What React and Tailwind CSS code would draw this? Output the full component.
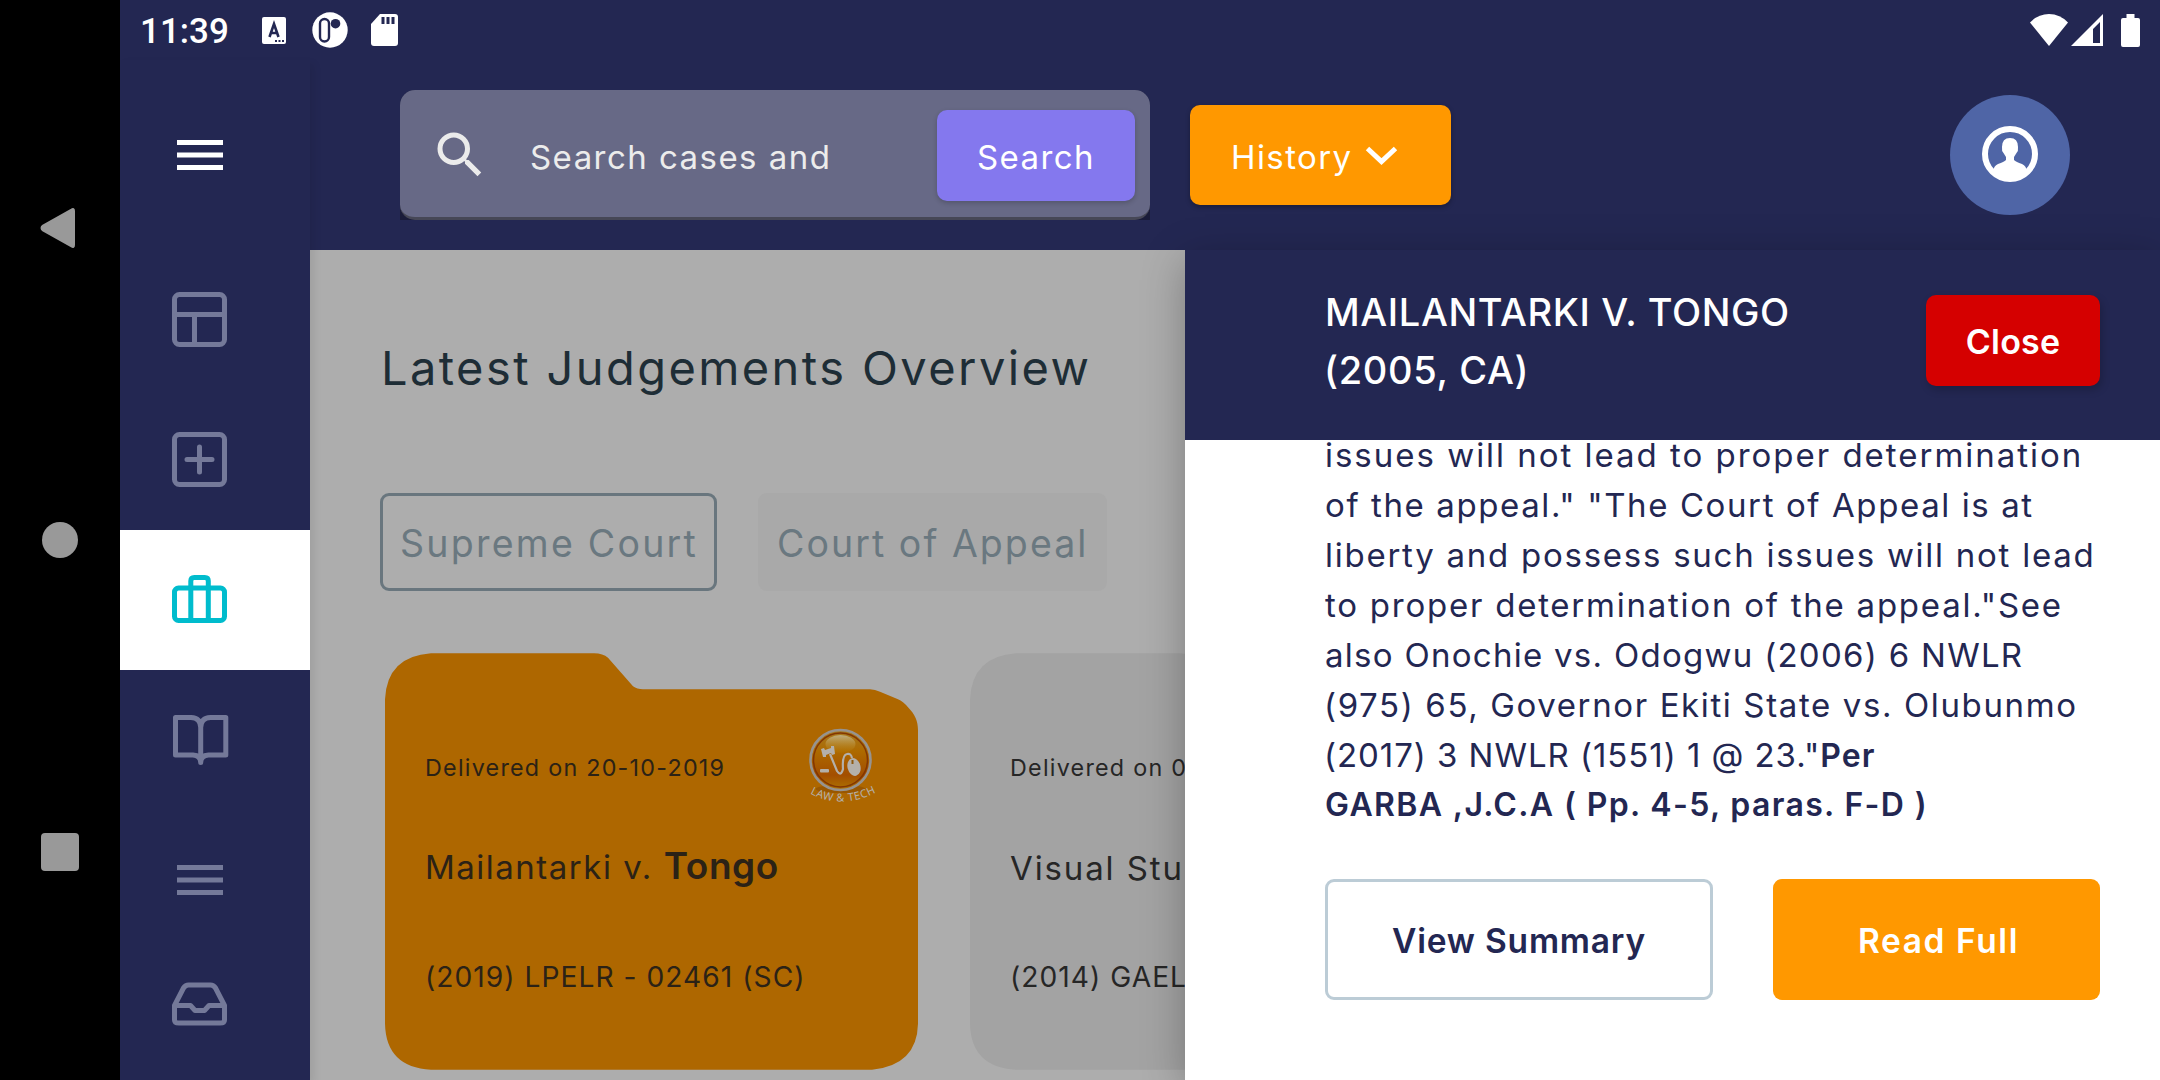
import React from "react";

const FOLDER_PATH =
  "M46 0H209Q218 0 223 4.5L248 33Q252 36 258 36H485Q490 36 495 38.5L513 46Q518 48 523 54C530 61 533 68 533 77V370.5Q532 412 487 416.5H46Q1 414 0 370.5V46Q2 3 46 0Z";

function NavBar() {
  return (
    <div className="flex h-full w-[120px] shrink-0 flex-col items-center bg-black">
      <svg className="mt-[204px] h-[48px] w-[120px]" viewBox="0 0 120 48">
        <path d="M43 21.500L71.500 5.500Q74 4 74 7V41Q74 44 71.500 42.500L43 26.500Q40 24 43 21.500Z" fill="#999" stroke="#999" strokeWidth="2" />
      </svg>
      <div className="mt-[270px] size-[36px] rounded-full bg-[#999]" />
      <div className="mt-[275px] size-[38px] rounded-[4px] bg-[#999]" />
    </div>
  );
}

function StatusBar() {
  return (
    <div className="flex h-[60px] w-full shrink-0 items-center bg-[#232752] pl-[20px] pr-[20px] text-white">
      <span className="w-[90px] whitespace-nowrap pt-[3px] font-['Roboto'] text-[35px] font-medium leading-[40px]">11:39</span>
      <svg className="ml-[32px] h-[27px] w-[24px]" viewBox="0 0 24 27">
        <rect width="24" height="27" rx="2" fill="#fff" />
        <path d="M7.500 20L12 7L16.500 20M9 16H15" fill="none" stroke="#232752" strokeWidth="2.600" />
        <path d="M13 24H15M16.500 24H18.500M20 24H22" stroke="#232752" strokeWidth="2" />
      </svg>
      <svg className="ml-[26px] h-[36px] w-[36px]" viewBox="0 0 36 36">
        <circle cx="18" cy="18" r="17.700" fill="#fff" />
        <rect x="8" y="7" width="9" height="22.500" rx="4.500" fill="#fff" stroke="#232752" strokeWidth="2.400" />
        <circle cx="23.500" cy="11.700" r="4.800" fill="#232752" />
      </svg>
      <svg className="ml-[23px] h-[32px] w-[27px]" viewBox="0 0 27 32">
        <path d="M9 0H24Q27 0 27 3V29Q27 32 24 32H3Q0 32 0 29V10Z" fill="#fff" />
        <path d="M12 3V10M17 3V10M22 3V10" stroke="#232752" strokeWidth="3" />
      </svg>
      <svg className="ml-auto h-[32px] w-[38px]" viewBox="0 0 38 32">
        <path d="M0 8.500Q8 0 19 0T38 8.500L19 32Z" fill="#fff" />
      </svg>
      <svg className="ml-[3px] h-[32px] w-[32px]" viewBox="0 0 32 32">
        <path d="M32 0V32H0ZM29 8L22 15V29H29Z" fill="#fff" fillRule="evenodd" />
      </svg>
      <svg className="ml-[18px] h-[33px] w-[19px]" viewBox="0 0 19 33">
        <path d="M5.500 0H13.500V4H17Q19 4 19 6V31Q19 33 17 33H2Q0 33 0 31V6Q0 4 2 4H5.500Z" fill="#fff" />
      </svg>
    </div>
  );
}

const menuPath = "M7 17.500H53M7 30H53M7 42.500H53";

const sideItems = [
  {
    name: "dashboard",
    box: "h-[140px]",
    icon: (
      <>
        <rect x="4.500" y="4.500" width="50" height="50" rx="5" />
        <path d="M4.500 24.500H54.500M24.500 24.500V54.500" />
      </>
    ),
  },
  {
    name: "add",
    box: "h-[140px]",
    icon: (
      <>
        <rect x="4.500" y="4.500" width="50" height="50" rx="5" />
        <path d="M17 29.500H42M29.500 17V42" strokeLinecap="round" />
      </>
    ),
  },
  {
    name: "cases",
    box: "h-[140px] bg-white",
    active: true,
    icon: (
      <>
        <rect x="4.500" y="18" width="50" height="32.500" rx="4" />
        <path d="M20.800 50.500V11Q20.800 7.500 24.300 7.500H34.800Q38.300 7.500 38.300 11V50.500" />
      </>
    ),
  },
  {
    name: "library",
    box: "h-[140px]",
    icon: (
      <path
        d="M5.500 7.500H21Q30.700 8 30.700 17.500Q30.700 8 40.500 7.500H55.800V45H38.500Q30.700 45.500 30.700 52.500Q30.700 45.500 23 45H5.500ZM30.700 15V52.500"
        strokeLinejoin="round"
        strokeLinecap="round"
      />
    ),
  },
  { name: "list", box: "h-[140px]", icon: <path d={menuPath} /> },
  {
    name: "inbox",
    box: "h-[107px]",
    icon: (
      <path
        d="M4.500 31.500H20.500L25 36.500H34.500L39 31.500H54.500M4.500 31.500L13.500 14Q15.500 11 18.500 11H40.500Q43.500 11 45.500 14L54.500 31.500V46Q54.500 49 50 49H9Q4.500 49 4.500 46Z"
        strokeLinejoin="round"
      />
    ),
  },
];

function Sidebar() {
  return (
    <div className="relative z-10 flex w-[190px] shrink-0 flex-col bg-[#232752] shadow-[4px_4px_8px_rgba(0,0,0,0.08)]">
      <div className="flex h-[190px] shrink-0 items-center pl-[50px]">
        <svg className="size-[60px]" viewBox="0 0 60 60" fill="none" stroke="#fff" strokeWidth="5">
          <path d={menuPath} />
        </svg>
      </div>
      {sideItems.map((item) => (
        <div key={item.name} className={"flex shrink-0 items-center pl-[50px] " + item.box}>
          <svg className="size-[60px]" viewBox="0 0 60 60" fill="none" stroke={item.active ? "#00bccd" : "#747999"} strokeWidth="5">
            {item.icon}
          </svg>
        </div>
      ))}
    </div>
  );
}

function Header() {
  return (
    <div className="flex h-[190px] shrink-0 items-center bg-[#232752] pl-[90px] pr-[90px]">
      <div className="h-[130px] w-[750px] shrink-0 rounded-t-[15px] bg-[#1a1c3a]">
        <div className="flex h-[130px] items-center rounded-[15px] border-b-[3px] border-[#464756] bg-[#676986] pl-[30px] pr-[15px]">
          <svg className="mt-[3px] size-[60px] shrink-0" viewBox="0 0 24 24" fill="#ebebeb">
            <path d="M15.500 14h-.79l-.28-.27A6.471 6.471 0 0 0 16 9.500 6.500 6.500 0 1 0 9.500 16c1.610 0 3.090-.59 4.230-1.570l.27.28v.79l5 4.990L20.490 19l-4.990-5zm-6 0C7.010 14 5 11.990 5 9.500S7.010 5 9.500 5 14 7.010 14 9.500 11.990 14 9.500 14z" />
          </svg>
          <span className="ml-[40px] whitespace-nowrap pt-[6px] text-[33px] leading-[40px] tracking-[1.45px] text-[#ececec]">Search cases and</span>
          <button className="ml-auto mt-[3px] h-[91px] w-[198px] rounded-[10px] bg-[#8478ee] pl-[40px] pt-[3px] text-left text-[33px] leading-[40px] tracking-[1.4px] text-white shadow-[0_2px_5px_rgba(0,0,0,0.2)]">Search</button>
        </div>
      </div>
      <button className="ml-[40px] flex h-[100px] w-[261px] shrink-0 items-center rounded-[10px] bg-[#ff9800] pl-[41px] text-white shadow-[0_2px_5px_rgba(0,0,0,0.3)]">
        <span className="w-[122px] whitespace-nowrap pt-[3px] text-left text-[33px] leading-[40px] tracking-[1.4px]">History</span>
        <svg className="ml-[12px] mt-[2px] h-[20px] w-[33px]" viewBox="0 0 33 20" fill="none" stroke="#fff" strokeWidth="5">
          <path d="M2.500 2.500L16.500 15.500L30.500 2.500" />
        </svg>
      </button>
      <div className="ml-auto flex size-[120px] shrink-0 items-center justify-center rounded-full bg-[#4f65a6]">
        <svg className="-mt-[2px] size-[56px]" viewBox="0 0 56 56">
          <circle cx="28" cy="28" r="25" fill="none" stroke="#fff" strokeWidth="6" />
          <path d="M20 21Q20 12 28 12T36 21Q36.500 25 34.500 27L32 31V34Q34 36 40 38Q44.500 40 44.500 44.500Q38 53 28 53T11.500 44.500Q11.500 40 16 38Q22 36 24 34V31L21.500 27Q19.500 25 20 21Z" fill="#fff" />
        </svg>
      </div>
    </div>
  );
}

function Logo() {
  return (
    <svg className="absolute left-[415px] top-[67px] h-[90px] w-[84px]" viewBox="0 0 84 90">
      <defs>
        <linearGradient id="ball" x1="0" y1="0" x2="0" y2="1">
          <stop offset="0" stopColor="#a77a22" />
          <stop offset=".35" stopColor="#ad6a00" />
          <stop offset=".75" stopColor="#a34e00" />
          <stop offset="1" stopColor="#ad7400" />
        </linearGradient>
        <linearGradient id="gloss" x1="0" y1="0" x2="0" y2="1">
          <stop offset="0" stopColor="#bfae80" />
          <stop offset="1" stopColor="#b87a00" stopOpacity=".2" />
        </linearGradient>
        <path id="arc" d="M9 73Q41 91 78 71.500" />
      </defs>
      <ellipse cx="40.500" cy="69" rx="25" ry="4" fill="#8a4c00" opacity=".6" />
      <circle cx="40.500" cy="40" r="30" fill="url(#ball)" stroke="#97938f" strokeWidth="2.600" />
      <circle cx="40.500" cy="40" r="27" fill="none" stroke="#843600" strokeWidth="1.500" />
      <ellipse cx="40.500" cy="24" rx="15" ry="9" fill="url(#gloss)" />
      <g fill="#b4b0aa">
        <path d="M21 29L24 28L25 30L31 28L31 26L34 26L35 34L32 35L31 33L26 35L26 37L23 37Z" />
        <rect x="20" y="49" width="9" height="3.500" rx="1" />
        <ellipse cx="54" cy="47" rx="6.500" ry="9" transform="rotate(-14 54 47)" />
      </g>
      <path d="M30 34L37 51Q41 57 43 49Q42 35 47 34Q51 33 52 38" fill="none" stroke="#b4b0aa" strokeWidth="2.200" />
      <path d="M52.500 40V44" stroke="#8f5a10" strokeWidth="2" />
      <text fontFamily="'Noto Sans', sans-serif" fontSize="11" fill="#b4b0aa">
        <textPath href="#arc" textLength="69" startOffset="1">LAW &amp; TECH</textPath>
      </text>
    </svg>
  );
}

function Card({ fill, ink, date, title, strong, cite, titleClass, logo }) {
  return (
    <div className={"relative h-[417px] w-[533px] shrink-0 whitespace-nowrap pl-[40px] pt-[100px] " + ink}>
      <svg className="absolute inset-0 -z-10 h-[417px] w-[533px]" viewBox="0 0 533 416.500">
        <path d={FOLDER_PATH} fill={fill} />
      </svg>
      <div className="text-[23.3px] leading-[30px] tracking-[1.25px]">{date}</div>
      <div className={"mt-[58px] flex h-[50px] items-baseline text-[33px] leading-[50px] " + titleClass}>
        <span>{title}</span>
        {strong && <span className="ml-[11px] text-[37px] font-semibold tracking-[0.54px]">{strong}</span>}
      </div>
      <div className="mt-[66px] text-[28.2px] leading-[40px] tracking-[1.02px]">{cite}</div>
      {logo && <Logo />}
    </div>
  );
}

function Content() {
  return (
    <div className="relative isolate flex w-[875px] shrink-0 flex-col overflow-hidden bg-[#adadad] pl-[70px]">
      <h1 className="ml-px mt-[88px] whitespace-nowrap text-[47px] leading-[60px] tracking-[2.41px] text-[#1e2d36]">Latest Judgements Overview</h1>
      <div className="mt-[95px] flex text-[37.5px] leading-[50px] text-[#6a7880]">
        <div className="h-[98px] w-[337px] whitespace-nowrap rounded-[9px] border-[3px] border-[#69767e] pl-[17px] pt-[23px] tracking-[2.25px]">Supreme Court</div>
        <div className="ml-[41px] h-[98px] w-[349px] whitespace-nowrap rounded-[9px] bg-[#a9a9a9] pl-[19px] pt-[26px] tracking-[2.05px]">Court of Appeal</div>
      </div>
      <div className="ml-[5px] mt-[62px] flex gap-[52px]">
        <Card
          fill="#ae6700"
          ink="text-[#2b2216]"
          date="Delivered on 20-10-2019"
          title="Mailantarki v."
          titleClass="tracking-[1.5px]"
          strong="Tongo"
          cite="(2019) LPELR - 02461 (SC)"
          logo
        />
        <Card
          fill="#a3a3a3"
          ink="text-[#262626]"
          date="Delivered on 0"
          title="Visual Stu"
          titleClass="tracking-[1.88px] pt-[2px]"
          cite="(2014) GAEL"
        />
      </div>
    </div>
  );
}

function CasePanel() {
  return (
    <div className="relative flex w-[975px] shrink-0 flex-col bg-white text-[#232752] shadow-[0_10px_40px_rgba(0,0,0,0.28)]">
      <div className="relative z-10 flex h-[190px] shrink-0 bg-[#232752] pl-[140px] pr-[60px] text-white">
        <h2 className="mt-[33px] whitespace-nowrap text-[38px] font-medium leading-[58px]">
          <span className="block tracking-[0.62px]">MAILANTARKI V. TONGO</span>
          <span className="-ml-px block tracking-[0.7px]">(2005, CA)</span>
        </h2>
        <button className="ml-auto mt-[45px] h-[91px] w-[174px] rounded-[10px] bg-[#d50000] pt-[3px] text-[34px] font-semibold leading-[40px] tracking-[0.2px] shadow-[2px_4px_8px_rgba(0,0,0,0.2)]">Close</button>
      </div>
      <div className="-mt-[10px] h-[400px] whitespace-nowrap pl-[140px] text-[33px] leading-[50px]">
        <p className="tracking-[1.98px]">issues will not lead to proper determination</p>
        <p className="tracking-[1.6px]">of the appeal." "The Court of Appeal is at</p>
        <p className="tracking-[1.74px]">liberty and possess such issues will not lead</p>
        <p className="tracking-[1.76px]">to proper determination of the appeal."See</p>
        <p className="tracking-[1.28px]">also Onochie vs. Odogwu (2006) 6 NWLR</p>
        <p className="-ml-px tracking-[1.62px]">(975) 65, Governor Ekiti State vs. Olubunmo</p>
        <p className="-ml-px h-[50px] tracking-[0.95px]">
          (2017) 3 NWLR (1551) 1 @ 23."<b className="text-[32px] font-semibold tracking-[1px]">Per</b>
        </p>
        <p className="text-[32px] font-semibold tracking-[1.36px]">GARBA ,J.C.A ( Pp. 4-5, paras. F-D )</p>
      </div>
      <div className="ml-[140px] mt-[49px] flex gap-[60px] text-[33.5px] font-semibold leading-[40px]">
        <button className="h-[121px] w-[388px] rounded-[9px] border-[3px] border-[#bcccd6] pt-[3px] tracking-[0.8px]">View Summary</button>
        <button className="h-[121px] w-[327px] rounded-[9px] bg-[#ff9800] pl-[4px] pt-[3px] tracking-[1.6px] text-white">Read Full</button>
      </div>
    </div>
  );
}

export default function App() {
  return (
    <div className="flex h-[1080px] w-[2160px] overflow-hidden bg-black font-['Inter',sans-serif]">
      <NavBar />
      <div className="flex w-[2040px] flex-col">
        <StatusBar />
        <div className="flex h-[1020px]">
          <Sidebar />
          <div className="flex w-[1850px] flex-col">
            <Header />
            <div className="flex h-[830px]">
              <Content />
              <CasePanel />
            </div>
          </div>
        </div>
      </div>
    </div>
  );
}
